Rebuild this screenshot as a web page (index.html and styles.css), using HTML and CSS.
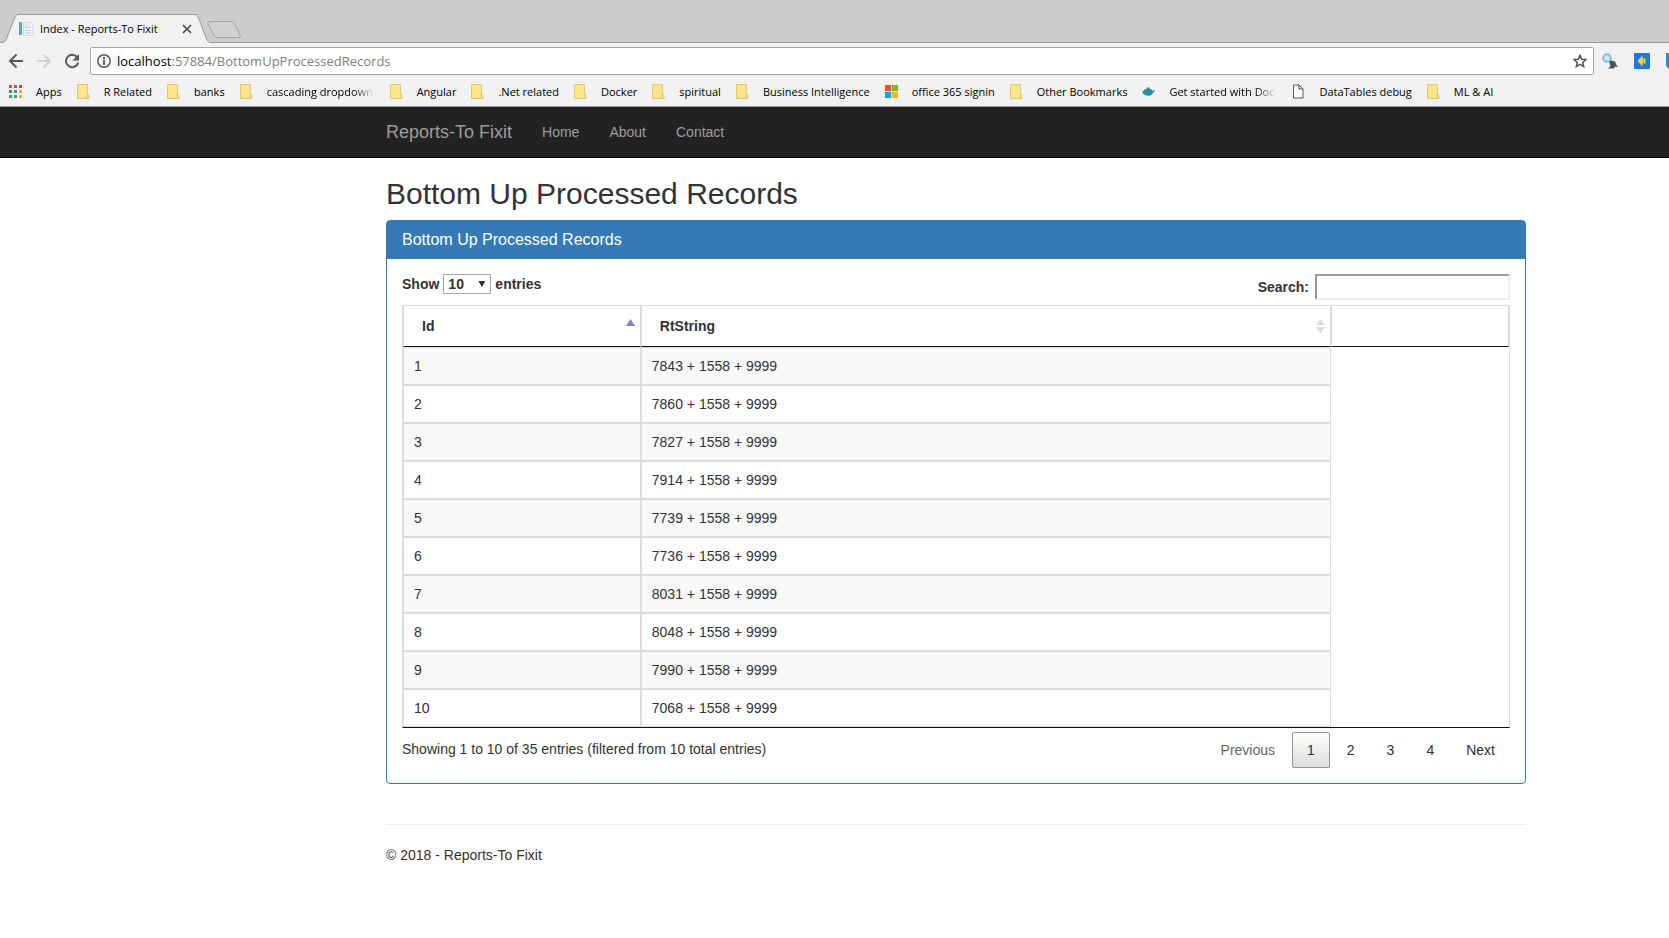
FILE: index.html
```html
<!DOCTYPE html>
<html lang="en">
<head>
<meta charset="utf-8">
<title>Index - Reports-To Fixit</title>
<link rel="stylesheet" href="styles.css">
</head>
<body>
<svg class="defs" aria-hidden="true">
  <symbol id="folder" viewBox="0 0 13 15">
    <path d="M.5.5h10v9.5l1.5 1v3.500H.5z" fill="#fde58c" stroke="#e6c667"/>
    <path d="M10 9.500v4.500" fill="none" stroke="#e6c667"/>
  </symbol>
</svg>

<header class="browser">
  <div class="tabstrip">
    <svg class="tabshape" width="245" height="30" viewBox="0 0 245 30" aria-hidden="true">
      <path d="M0 28.500H2Q5 28 6 26L15 3Q16 .5 18 .5H195Q197 .5 198 3L207 26Q208 28.500 211 28.500H245V30H0z" fill="#f2f2f2"/>
      <path d="M0 28.500H2Q5 28 6 26L15 3Q16 .5 18 .5H195Q197 .5 198 3L207 26Q208 28.500 211 28.500H245" fill="none" stroke="#999"/>
      <path d="M210 7.500H231Q233 7.500 234 9L240 21Q241 23.500 239 23.500H217Q215 23.500 214 22L208 10Q207 7.500 210 7.500z" fill="#d0d0d0" stroke="#a5a5a5"/>
    </svg>
    <div class="tab">
      <svg width="16" height="16" viewBox="0 0 16 16" aria-hidden="true">
        <path d="M1 1h3v13H1z" fill="#67a5c8"/>
        <path d="M5.500 1.500h7l2.500 2.500v10.500H5.500z" fill="#f0f5f8" stroke="#d0d9df"/>
        <path d="M7 4.500h4M7 6.500h6M7 9.500h6M7 12h6" stroke="#b9ccd8"/>
      </svg>
      <span class="tab-title">Index - Reports-To Fixit</span>
      <button class="plain" aria-label="Close tab"><svg width="10" height="10" viewBox="0 0 10 10"><path d="M1 1l8 8M9 1L1 9" stroke="#444" stroke-width="1.600"/></svg></button>
    </div>
  </div>
  <div class="toolbar">
    <div class="nav-buttons">
      <button class="plain" aria-label="Back"><svg width="16" height="16" viewBox="0 0 16 16"><path d="M15 8H2.500M8.500 1.500L2 8l6.500 6.500" fill="none" stroke="#5a5a5a" stroke-width="2"/></svg></button>
      <button class="plain" aria-label="Forward"><svg width="16" height="16" viewBox="0 0 16 16"><path d="M1 8h12.500M7.500 1.500L14 8l-6.500 6.500" fill="none" stroke="#d3d3d3" stroke-width="2"/></svg></button>
      <button class="plain" aria-label="Reload"><svg width="16" height="16" viewBox="0 0 16 16"><path d="M13.300 4.500A6.200 6.200 0 1 0 14.200 9.500" fill="none" stroke="#5a5a5a" stroke-width="2"/><path d="M15 1v6.500H8.500z" fill="#5a5a5a"/></svg></button>
    </div>
    <div class="address">
      <svg width="14" height="14" viewBox="0 0 14 14" aria-hidden="true"><circle cx="7" cy="7" r="6.200" fill="none" stroke="#555" stroke-width="1.500"/><path d="M7 6v5M7 3v2" stroke="#555" stroke-width="2"/></svg>
      <div class="url"><span class="host">localhost</span>:57884/BottomUpProcessedRecords</div>
      <button class="plain" aria-label="Bookmark this page"><svg width="14" height="14" viewBox="0 0 14 14"><path d="M7 1.300l1.700 3.900 4.200.4-3.200 2.800 1 4.200L7 10.400l-3.700 2.200 1-4.200L1.100 5.600l4.200-.4z" fill="none" stroke="#555" stroke-width="1.500"/></svg></button>
    </div>
    <div class="extensions">
      <svg width="16" height="16" viewBox="0 0 16 16" aria-hidden="true"><path d="M7 7l3 3" stroke="#889" stroke-width="2"/><circle cx="5" cy="5" r="4" fill="#b5dced" stroke="#8fb2c4" stroke-width="1.500"/><path d="M3.500 3.500h3v3h-3z" fill="#d7edf6"/><path d="M7 9l2-1.500 4 1 1.500 3.500 1.500 2-3-.5-1 2H6l2.500-2.500z" fill="#4a5066"/></svg>
      <svg width="16" height="16" viewBox="0 0 16 16" aria-hidden="true"><rect width="16" height="16" rx="1" fill="#1c78e6"/><path d="M3.500 8L8.500 2.500v3H9v5h-.5v3zM9.500 5.500h2v5h-2z" fill="#ffd24a"/></svg>
      <svg width="3" height="16" viewBox="0 0 3 16" aria-hidden="true"><path d="M0 0h3v16l-3-3z" fill="#1593dc"/></svg>
    </div>
  </div>
  <nav class="bookmarks" aria-label="Bookmarks">
    <a href="#"><svg viewBox="0 0 13 13"><path d="M0 0h3v3H0zM5 0h3v3H5zM10 0h3v3h-3z" fill="#d84a4a"/><path d="M0 5h3v3H0zM0 10h3v3H0z" fill="#36a160"/><path d="M5 5h3v3H5z" fill="#4285e4"/><path d="M10 5h3v3h-3zM10 10h3v3h-3z" fill="#e3ad3a"/><path d="M5 10h3v3H5z" fill="#36a160"/></svg><span>Apps</span></a>
    <a href="#"><svg><use href="#folder"/></svg><span>R Related</span></a>
    <a href="#"><svg><use href="#folder"/></svg><span>banks</span></a>
    <a href="#"><svg><use href="#folder"/></svg><span class="fade">cascading dropdown</span></a>
    <a href="#"><svg><use href="#folder"/></svg><span>Angular</span></a>
    <a href="#"><svg><use href="#folder"/></svg><span>.Net related</span></a>
    <a href="#"><svg><use href="#folder"/></svg><span>Docker</span></a>
    <a href="#"><svg><use href="#folder"/></svg><span>spiritual</span></a>
    <a href="#"><svg><use href="#folder"/></svg><span>Business Intelligence</span></a>
    <a href="#"><svg viewBox="0 0 15 15"><path d="M0 0h7v7H0z" fill="#f25022"/><path d="M8 0h7v7H8z" fill="#7fba00"/><path d="M0 8h7v7H0z" fill="#00a4ef"/><path d="M8 8h7v7H8z" fill="#ffb900"/></svg><span>office 365 signin</span></a>
    <a href="#"><svg><use href="#folder"/></svg><span>Other Bookmarks</span></a>
    <a href="#"><svg viewBox="0 0 15 15"><path d="M0 7h2l1-2h2l1-2h3v2h2l1 2 1-1h2l-2 3-3 3-4 .5-4-1.500z" fill="#2b8da8"/></svg><span class="fade">Get started with Doc</span></a>
    <a href="#"><svg viewBox="0 0 13 15"><path d="M1.500 1h5.500l4 4v9H1.500zM7 1v4h4" fill="#fff" stroke="#555"/></svg><span>DataTables debug</span></a>
    <a href="#"><svg><use href="#folder"/></svg><span>ML &amp; AI</span></a>
  </nav>
</header>

<nav class="navbar" aria-label="Site">
  <a class="brand" href="#">Reports-To Fixit</a>
  <a href="#">Home</a>
  <a href="#">About</a>
  <a href="#">Contact</a>
</nav>

<main class="content">
  <h2>Bottom Up Processed Records</h2>
  <section class="panel">
    <h3>Bottom Up Processed Records</h3>
    <div class="panel-body">
      <div class="controls">
        <label>Show <span class="select"><select><option>10</option><option>25</option><option>50</option><option>100</option></select></span> entries</label>
        <label class="search">Search: <input type="search"></label>
      </div>
      <table>
        <colgroup><col class="col-id"><col class="col-string"><col></colgroup>
        <thead>
          <tr>
            <th scope="col"><div class="sort">Id<svg width="9" height="14" viewBox="0 0 9 14"><path d="M4.500 0L9 7H0z" fill="#7f7fd5"/></svg></div></th>
            <th scope="col"><div class="sort">RtString<svg width="9" height="14" viewBox="0 0 9 14"><path d="M4.500 0L9 6H0zM0 8h9l-4.500 6z" fill="#dcdcdc"/></svg></div></th>
            <th></th>
          </tr>
        </thead>
        <tbody>
          <tr><td>1</td><td>7843 + 1558 + 9999</td></tr>
          <tr><td>2</td><td>7860 + 1558 + 9999</td></tr>
          <tr><td>3</td><td>7827 + 1558 + 9999</td></tr>
          <tr><td>4</td><td>7914 + 1558 + 9999</td></tr>
          <tr><td>5</td><td>7739 + 1558 + 9999</td></tr>
          <tr><td>6</td><td>7736 + 1558 + 9999</td></tr>
          <tr><td>7</td><td>8031 + 1558 + 9999</td></tr>
          <tr><td>8</td><td>8048 + 1558 + 9999</td></tr>
          <tr><td>9</td><td>7990 + 1558 + 9999</td></tr>
          <tr><td>10</td><td>7068 + 1558 + 9999</td></tr>
        </tbody>
      </table>
      <div class="table-foot">
        <div>Showing 1 to 10 of 35 entries (filtered from 10 total entries)</div>
        <div class="pages">
          <button disabled>Previous</button>
          <button class="current">1</button>
          <button>2</button>
          <button>3</button>
          <button>4</button>
          <button>Next</button>
        </div>
      </div>
    </div>
  </section>
  <hr>
  <footer>© 2018 - Reports-To Fixit</footer>
</main>
</body>
</html>
```
FILE: styles.css
```css
* { box-sizing: border-box; }
body {
  margin: 0;
  overflow-x: hidden;
  background: #fff;
  color: #333;
  font: 14px/20px "Liberation Sans", Arial, sans-serif;
}
a { color: inherit; text-decoration: none; }
button, select, input { font: inherit; color: inherit; }
svg { display: block; flex: none; }
.defs { display: none; }
.plain { display: flex; padding: 0; border: 0; background: none; }

/* Browser window */
.browser {
  background: #f2f2f2;
  border-bottom: 1px solid #a0a0a0;
  color: #000;
  font: 11px/16px "Open Sans", "Noto Sans", sans-serif;
}
.tabstrip {
  position: relative;
  height: 43px;
  padding-top: 14px;
  background: #ccc linear-gradient(#999, #999) 0 100% / 100% 1px no-repeat;
}
.tabshape { position: absolute; left: 0; bottom: -1px; }
.tab {
  position: relative;
  display: flex;
  align-items: center;
  width: 192px;
  height: 30px;
  padding-left: 18px;
}
.tab-title { flex: 1; margin-left: 6px; white-space: nowrap; }
.toolbar { display: flex; align-items: center; padding: 4px 0; }
.nav-buttons { display: flex; justify-content: space-between; width: 72px; margin: 0 10px 0 8px; }
.address {
  display: flex;
  flex: 1;
  align-items: center;
  gap: 6px;
  height: 28px;
  padding: 0 6px;
  border: 1px solid #a6a6a6;
  border-radius: 2px;
  background: #fff;
}
.url { flex: 1; color: #808080; font-size: 13px; }
.host { color: #000; }
.extensions { display: flex; gap: 16px; margin-left: 8px; }
.bookmarks { display: flex; gap: 15px; height: 27px; padding: 0 9px 2px; white-space: nowrap; }
.bookmarks a { display: flex; align-items: center; gap: 14px; }
.bookmarks svg { width: 13px; height: 15px; }
.fade {
  width: 108px;
  -webkit-mask-image: linear-gradient(90deg, #000 80%, transparent);
  mask-image: linear-gradient(90deg, #000 80%, transparent);
}

/* Site navigation */
.navbar {
  display: flex;
  align-items: center;
  gap: 30px;
  height: 51px;
  padding: 0 143px 0 386px;
  border-bottom: 1px solid #080808;
  background: #222;
  color: #9d9d9d;
}
.brand { font-size: 18px; }

/* Page */
.content { padding: 19px 143px 20px 386px; }
h2 { margin: 0 0 10px; font-size: 30px; font-weight: 400; line-height: 33px; }
.panel { border: 1px solid #337ab7; border-radius: 4px; }
h3 { margin: 0; padding: 10px 15px; background: #337ab7; color: #fff; font-size: 16px; font-weight: 400; line-height: 18px; }
.panel-body { padding: 15px; }
.controls { display: flex; justify-content: space-between; align-items: flex-start; height: 31px; }
.controls label { display: flex; align-items: center; gap: 4px; font-weight: 700; }
.select { position: relative; display: flex; }
.select::after {
  position: absolute;
  top: 7px;
  right: 6px;
  width: 7px;
  height: 6px;
  background: #333;
  clip-path: polygon(0 0, 100% 0, 50% 100%);
  content: "";
  pointer-events: none;
}
select {
  width: 48px;
  height: 20px;
  padding: 0 4px;
  border: 1px solid #a9a9a9;
  border-radius: 0;
  background: #fff;
  line-height: 18px;
  appearance: none;
}
.controls .search { gap: 6px; }
input { width: 195px; height: 26px; border: 2px inset #eee; background: #fff; }
table { width: 100%; table-layout: fixed; border: 1px solid #ddd; border-bottom-color: #111; border-collapse: separate; border-spacing: 0; }
.col-id { width: 21.500%; }
.col-string { width: 62.400%; }
th { padding: 10px 18px; border: 1px solid #ddd; border-top: 0; border-bottom-color: #111; text-align: left; }
td { padding: 8px 10px; border: 1px solid #ddd; }
tbody tr:nth-child(odd) td { background: #f9f9f9; }
.sort { display: flex; justify-content: space-between; align-items: center; margin-right: -13px; }
.table-foot { display: flex; justify-content: space-between; padding-top: 4px; }
.table-foot > div:first-child { padding-top: 7px; }
.pages { display: flex; gap: 2px; }
.pages button { padding: 7px 14px; border: 1px solid transparent; border-radius: 2px; background: none; }
.pages button:disabled { color: #666; }
.pages .current { border-color: #979797; background: linear-gradient(#fff, #dcdcdc); }
hr { margin: 40px 0 20px; border: 0; border-top: 1px solid #eee; }
```
